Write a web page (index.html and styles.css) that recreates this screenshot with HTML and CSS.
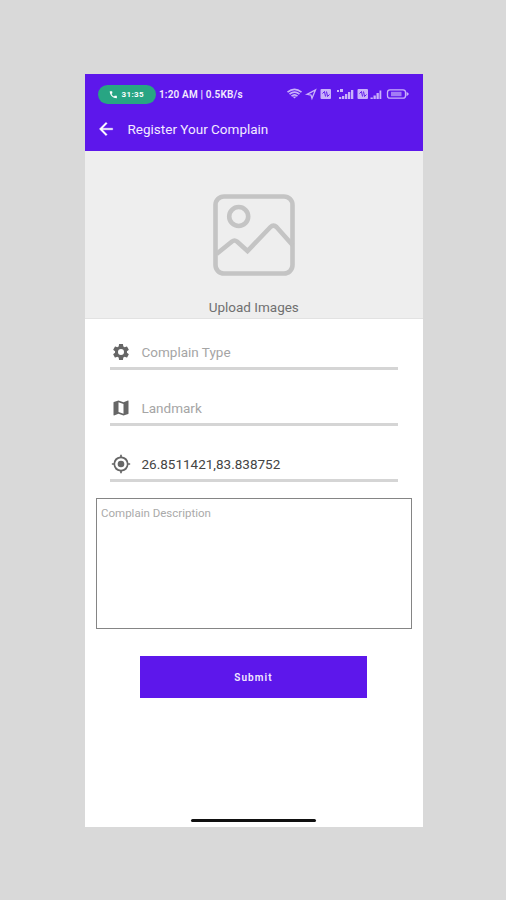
FILE: index.html
```html
<!DOCTYPE html>
<html lang="en">
<head>
<meta charset="utf-8">
<title>Register Your Complain</title>
<link rel="stylesheet" href="styles.css">
</head>
<body>
<main class="phone">
  <header class="header">
    <div class="status">
      <span class="call"><svg width="9" height="9" viewBox="0 0 24 24"><path fill="currentColor" d="M6.6 10.8c1.4 2.8 3.800 5.200 6.600 6.600l2.200-2.200c.3-.3.7-.4 1-.2 1.100.4 2.300.6 3.600.6.600 0 1 .4 1 1V21c0 .6-.4 1-1 1C10.600 22 2 13.400 2 4c0-.6.4-1 1-1h4.500c.6 0 1 .4 1 1 0 1.200.2 2.400.6 3.600.1.300 0 .7-.3 1z"/></svg><span class="call-time">31:35</span></span>
      <span class="clock">1:20 AM | 0.5KB/s</span>
      <svg class="indicators" width="124" height="14" viewBox="0 0 124 14">
        <g fill="none" stroke="currentColor" stroke-width="1.700">
          <path d="M1.500 5.200Q8.500-.3 15.500 5.200M3.500 7.200Q8.500 3 13.500 7.200M5.500 9.200Q8.500 6.500 11.500 9.200"/>
          <path d="M21 7.300L29.500 3L26 11.300L25 8Z" stroke-width="1.300"/>
          <rect x="101.500" y="2.800" width="18" height="8.400" rx="2.500" stroke-width="1.300"/>
        </g>
        <g fill="currentColor">
          <path d="M6.500 9.500h4l-2 2z"/>
          <rect x="34.500" y="2" width="10.500" height="10" rx="1"/>
          <rect x="71.500" y="2" width="10.500" height="10" rx="1"/>
          <path d="M51 3h2v2h-2zM54 2h3v3h-3zM53 10h2.300v2h-2.300zM56 9h2.300v3h-2.300zM59 7h2.300v5h-2.300zM62 5h2.300v7h-2.300zM65 3h2.300v9h-2.300z"/>
          <path d="M84.500 10.500h2.300v1.500h-2.300zM87.500 8.500h2.300v3.500h-2.300zM90.500 6h2.300v6h-2.300zM93.500 3.500h1.800v8.500h-1.800z"/>
          <path d="M120.500 4.500l2.500 2.500-2.500 2.500z"/>
          <rect x="105" y="4.800" width="10.500" height="4.400" opacity=".65"/>
        </g>
        <path class="cut" d="M36.500 6.500l2-2 1 5M40.500 4.500l1 5 2-2M73.500 6.500l2-2 1 5M77.500 4.500l1 5 2-2"/>
      </svg>
    </div>
    <div class="toolbar">
      <svg width="20" height="20" viewBox="0 0 24 24"><path fill="currentColor" stroke="currentColor" stroke-width=".4" d="M20 11H7.830l5.590-5.590L12 4l-8 8 8 8 1.410-1.410L7.830 13H20z"/></svg>
      <h1 class="title">Register Your Complain</h1>
    </div>
  </header>
  <section class="upload">
    <svg width="82" height="82" viewBox="0 0 82 82" fill="none" stroke="currentColor" stroke-width="4.600">
      <rect x="2.500" y="2.500" width="77" height="77" rx="8.500"/>
      <circle cx="25.700" cy="22.500" r="9.500"/>
      <path d="M3.500 60L19 47.500Q21.500 45.500 24 47.500L34.500 57L57.500 33Q60.500 30 63.500 33L79.500 51"/>
    </svg>
    <span class="upload-label">Upload Images</span>
  </section>
  <form class="form">
    <div class="field">
      <svg width="20" height="20" viewBox="0 0 24 24"><path fill="currentColor" d="M19.140 12.940c.04-.3.060-.61.060-.94 0-.32-.02-.64-.07-.94l2.030-1.580c.18-.14.230-.41.120-.61l-1.920-3.320c-.12-.22-.37-.29-.59-.22l-2.390.96c-.5-.38-1.030-.7-1.620-.94l-.36-2.540c-.04-.24-.24-.41-.48-.41h-3.840c-.24 0-.43.170-.47.410l-.36 2.540c-.59.240-1.130.570-1.620.940l-2.390-.96c-.22-.08-.47 0-.59.220L2.740 8.870c-.12.210-.08.470.120.610l2.030 1.580c-.05.300-.09.630-.09.940s.02.640.070.940l-2.030 1.580c-.18.140-.23.410-.12.610l1.920 3.320c.12.220.370.290.590.220l2.390-.96c.5.380 1.030.7 1.620.940l.36 2.540c.05.240.24.410.48.410h3.840c.24 0 .44-.17.470-.41l.36-2.540c.59-.24 1.130-.56 1.620-.94l2.390.96c.22.080.47 0 .59-.22l1.920-3.320c.12-.22.070-.47-.12-.61zM12 15.600A3.600 3.600 0 1 1 12 8.400a3.600 3.600 0 0 1 0 7.200z"/></svg>
      <span class="hint">Complain Type</span>
    </div>
    <div class="field">
      <svg width="20" height="20" viewBox="0 0 24 24"><path fill="currentColor" d="M20.500 3l-.16.030L15 5.100 9 3 3.360 4.900c-.21.070-.36.250-.36.480V20.500c0 .28.220.5.500.5l.16-.03L9 18.900l6 2.100 5.640-1.900c.21-.07.360-.25.360-.48V3.500c0-.28-.22-.5-.5-.5zM15 19l-6-2.110V5l6 2.110z"/></svg>
      <span class="hint">Landmark</span>
    </div>
    <div class="field">
      <svg width="20" height="20" viewBox="0 0 24 24"><path fill="currentColor" d="M12 8a4 4 0 1 0 0 8 4 4 0 0 0 0-8zm8.940 3A9 9 0 0 0 13 3.060V1h-2v2.060A9 9 0 0 0 3.060 11H1v2h2.060A9 9 0 0 0 11 20.940V23h2v-2.060A9 9 0 0 0 20.940 13H23v-2zM12 19a7 7 0 1 1 0-14 7 7 0 0 1 0 14z"/></svg>
      <span class="value">26.8511421,83.838752</span>
    </div>
    <div class="description">Complain Description</div>
    <button class="submit" type="button">Submit</button>
  </form>
  <div class="home-bar"></div>
</main>
</body>
</html>
```
FILE: styles.css
```css
* { box-sizing: border-box; }
body {
  margin: 0;
  min-height: 900px;
  padding: 74px 83px 73px 84.500px;
  background: #d9d9d9;
  font-family: Roboto, sans-serif;
}
svg { display: block; flex: none; }
.phone {
  height: 753px;
  display: flex;
  flex-direction: column;
  background: #fff;
}
.header { height: 76.500px; background: #5d17eb; color: #fff; }
.status {
  height: 40px;
  padding: 0 13px 0 13px;
  display: flex;
  align-items: center;
}
.call {
  width: 58px;
  height: 19px;
  padding-left: 11px;
  border-radius: 10px;
  background: #28a583;
  display: flex;
  align-items: center;
  gap: 4px;
}
.call-time { font-size: 8px; font-weight: 700; letter-spacing: .35px; }
.clock {
  margin-left: 3.500px;
  font-size: 10px;
  font-weight: 600;
  letter-spacing: .15px;
  white-space: nowrap;
  color: #f3eaff;
}
.indicators { margin-left: auto; color: #c9b2fa; }
.cut { fill: none; stroke: #5d17eb; stroke-width: 1; }
.toolbar {
  height: 30px;
  padding-left: 11.500px;
  display: flex;
  align-items: center;
  gap: 11.500px;
}
.title { margin: 0; font-size: 13.500px; font-weight: 400; color: #f3eaff; }
.upload {
  height: 168px;
  padding-top: 43px;
  display: flex;
  flex-direction: column;
  align-items: center;
  background: #eee;
  color: #c4c4c4;
  border-bottom: 1px solid #e2e2e2;
}
.upload-label { margin-top: 23px; font-size: 13.500px; line-height: 16px; color: #707070; }
.form { flex: 1; padding: 14px 11.500px 0; }
.field {
  height: 37px;
  margin: 0 14px 19px;
  padding: 5px 0 0 .5px;
  display: flex;
  align-items: center;
  gap: 11px;
  border-bottom: 3px solid #d5d5d5;
  color: #666;
}
.hint, .value { font-size: 13.500px; }
.hint { color: #a5a5a5; }
.value { color: #444; }
.description {
  height: 131px;
  margin-top: -2.500px;
  padding: 7.500px 4px;
  border: 1.500px solid #858585;
  font-size: 11.500px;
  line-height: 13px;
  color: #aaa;
}
.submit {
  display: block;
  width: 227px;
  height: 42px;
  margin: 27px 0 0 44px;
  padding: 0;
  border: 0;
  background: #5d17eb;
  color: #f3eaff;
  font: 600 10px Roboto, sans-serif;
  letter-spacing: 1.100px;
}
.home-bar { width: 125px; height: 3px; margin: 0 auto 5px; border-radius: 2px; background: #111; }
```
